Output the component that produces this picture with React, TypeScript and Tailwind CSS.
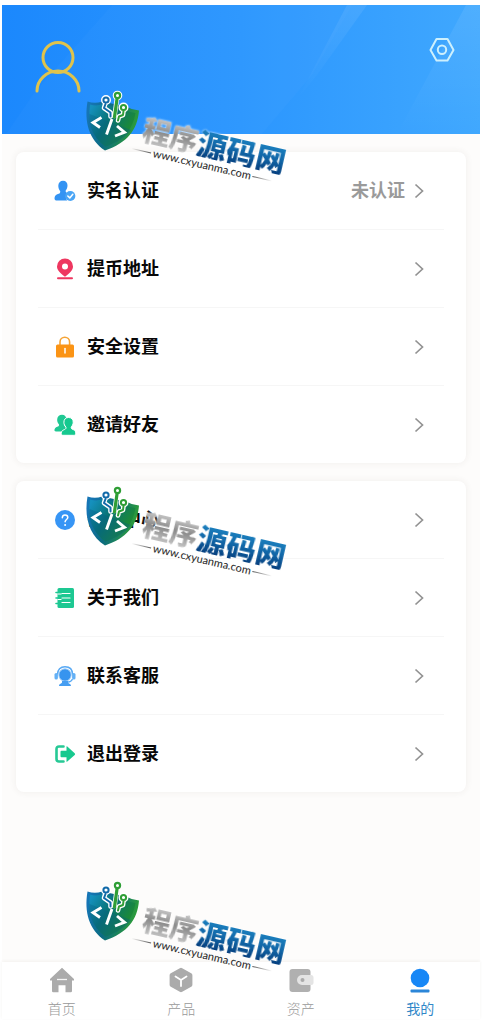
import React from "react";

const stroke = {
  fill: "none",
  stroke: "#fff",
  strokeLinecap: "round" as const,
  strokeLinejoin: "round" as const,
};

function VerifyIcon() {
  return (
    <svg viewBox="0 0 22 22" className="size-[22px]" aria-hidden="true">
      <path d="M9 0.8c3 0 4.7 2 4.5 5-.1 2.2-1 3.900-1.900 5 0 1.300.5 1.900 2 2.400a5 5 0 0 0-.3 7.300H3.200C1.300 20.500.4 19.700.5 17.900c.2-2.700 2.300-3.300 4.200-4.100 1.300-.5 1.700-1.400 1.500-2.600C5 9.800 4.300 8 4.300 5.800 4.300 2.800 6.200.8 9 .8z" fill="#3393f3" />
      <circle cx="16.300" cy="16" r="5.100" fill="#4aa5f5" />
      <path d="M13.800 16l2 1.900 3-3.600" {...stroke} strokeWidth="1.500" />
    </svg>
  );
}

function PinIcon() {
  return (
    <svg viewBox="0 0 22 22" className="size-[22px]" aria-hidden="true">
      <path fillRule="evenodd" d="M11 0.500a8 8 0 0 1 8 8c0 4-3.500 6.700-8 10.200C6.500 15.200 3 12.500 3 8.500a8 8 0 0 1 8-8zm0 5a3 3 0 1 0 0 6 3 3 0 0 0 0-6z" fill="#ee3760" />
      <rect x="3" y="19.200" width="16" height="2" rx="1" fill="#ee3760" />
    </svg>
  );
}

function LockIcon() {
  return (
    <svg viewBox="0 0 22 22" className="size-[22px]" aria-hidden="true">
      <path d="M6 9V6a4.800 4.800 0 0 1 9.600 0v3" fill="none" stroke="#f5a436" strokeWidth="1.600" />
      <rect x="2" y="8.500" width="18" height="13" rx="1.500" fill="#fb9415" />
      <path d="M11 12.500v4.500" {...stroke} strokeWidth="1.500" />
    </svg>
  );
}

function FriendsIcon() {
  return (
    <svg viewBox="0 0 22 22" className="size-[22px]" aria-hidden="true">
      <path d="M8 .8c2.700 0 4.400 1.800 4.300 4.500 0 3-1.200 4.400-2 5.300 0 2 1 2.400 2.700 3v3.900H2c-1.300 0-1.700-.8-1.500-2 .4-2.300 2.500-2.400 4-3.300.6-.5.7-1.200.4-1.900C3.700 9 3 7.500 3.200 5.300 3.300 2.600 5.300.8 8 .8z" fill="#20c893" />
      <path d="M14.500 3.500c3 0 4.800 1.900 4.700 4.700-.1 2.300-.9 3.700-2 4.800-.1 1.700.6 2.200 2.200 2.700 1.800.6 2.400 1.800 2.300 3.600 0 1.400-.5 2-1.900 2H8.900c-1.400 0-1.900-.8-1.700-2.200.3-2.300 1.500-2.800 3.200-3.500 1.500-.6 1.800-1.300 1.500-2.600-1.200-1.300-2-2.500-2-4.800 0-2.800 1.700-4.700 4.600-4.700z" fill="#15c98f" stroke="#fff" strokeWidth="1" />
    </svg>
  );
}

function HelpIcon() {
  return (
    <svg viewBox="0 0 22 22" className="size-[22px]" aria-hidden="true">
      <circle cx="11" cy="11" r="10" fill="#3795f5" />
      <path d="M8.300 8.700c.1-1.700 1.100-2.700 2.700-2.700s2.800 1 2.800 2.500c0 2-2.700 2.100-2.700 4.300" {...stroke} strokeWidth="1.500" />
      <circle cx="11.100" cy="15.900" r="1" fill="#fff" />
    </svg>
  );
}

function BookIcon() {
  return (
    <svg viewBox="0 0 22 22" className="size-[22px]" aria-hidden="true">
      <rect x="3.500" y="1" width="16.500" height="20" rx="1.500" fill="#1dc892" />
      <path d="M2 5.500h4M2 11h4M2 16.500h4" stroke="#1dc892" strokeWidth="1.600" strokeLinecap="round" />
      <path d="M4 7h3M4 12.500h3M8 6.500h8M8 11h8M8 15.500h8" {...stroke} strokeWidth="1.200" />
    </svg>
  );
}

function ServiceIcon() {
  return (
    <svg viewBox="0 0 22 22" className="size-[22px]" aria-hidden="true">
      <path d="M3.500 9.500C3.500 4.500 6.500 1.800 11 1.800s7.500 2.700 7.500 7.700" fill="none" stroke="#58a9f4" strokeWidth="1.500" />
      <rect x=".5" y="8" width="3.400" height="6.500" rx="1.600" fill="#63b0f5" />
      <rect x="18.100" y="8" width="3.400" height="6.500" rx="1.600" fill="#63b0f5" />
      <circle cx="11" cy="10" r="6.200" fill="#3694ef" stroke="#a4d0fa" strokeWidth="1" />
      <path d="M18.500 14c-.8 2-2.500 3-4.800 3.200" fill="none" stroke="#58a9f4" strokeWidth="1.200" />
      <path d="M8 16h6v1.500c0 1 3 1 3 3.500H5c0-2.500 3-2.500 3-3.500z" fill="#469ef2" />
    </svg>
  );
}

function LogoutIcon() {
  return (
    <svg viewBox="0 0 22 22" className="size-[22px]" aria-hidden="true">
      <path d="M9.500 3.500H5Q2.500 3.500 2.500 6v10Q2.500 18.500 5 18.500h4.500" fill="none" stroke="#26c995" strokeWidth="2.600" strokeLinecap="round" />
      <path d="M7.500 7.800h5V3.800q0-1 .8-.3l7.400 6.700q.9.900 0 1.800l-7.400 6.600q-.8.700-.8-.3v-4h-5q-1 0-1-1V8.800q0-1 1-1z" fill="#18c98f" />
    </svg>
  );
}

function Chevron() {
  return (
    <svg viewBox="0 0 10 16" className="h-4 w-[10px]" aria-hidden="true">
      <path d="M1.500 1.500l7 6.500-7 6.500" fill="none" stroke="#929292" strokeWidth="1.700" />
    </svg>
  );
}

type Item = { label: string; note?: string; icon: () => React.ReactElement };

const account: Item[] = [
  { label: "实名认证", note: "未认证", icon: VerifyIcon },
  { label: "提币地址", icon: PinIcon },
  { label: "安全设置", icon: LockIcon },
  { label: "邀请好友", icon: FriendsIcon },
];

const support: Item[] = [
  { label: "帮助中心", icon: HelpIcon },
  { label: "关于我们", icon: BookIcon },
  { label: "联系客服", icon: ServiceIcon },
  { label: "退出登录", icon: LogoutIcon },
];

function MenuCard({ items }: { items: Item[] }) {
  return (
    <ul className="mx-[14px] rounded-lg bg-white px-[22px] shadow-[0_0_7px_rgba(80,60,50,0.08)]">
      {items.map(({ label, note, icon: Icon }) => (
        <li key={label} className="border-b border-[#f6f6f6] last:border-b-0">
          <a href="#" className="flex h-[77px] items-center pr-5 pl-4">
            <Icon />
            <span className="ml-[11px] pb-[3px] text-[18px] leading-6 font-bold text-[#080808]">{label}</span>
            <span className="mr-[9px] ml-auto pb-[3px] text-[18px] leading-6 font-bold text-[#9a9a9a]">{note}</span>
            <Chevron />
          </a>
        </li>
      ))}
    </ul>
  );
}

function HomeIcon() {
  return (
    <svg viewBox="0 0 26 26" className="size-[26px]" aria-hidden="true">
      <path d="M13 .8L25 12v1.500h-2V24q0 1.300-1.300 1.300h-5.200v-7h-7v7H4.300Q3 25.300 3 24V13.500H1V12z" fill="#ababab" />
      <path d="M8 12.500h10" stroke="#f5f5f5" strokeWidth="1.300" />
    </svg>
  );
}

function ProductIcon() {
  return (
    <svg viewBox="0 0 26 26" className="size-[26px]" aria-hidden="true">
      <path d="M11.800 1.200q1.200-.7 2.400 0l9 5.100q1.200.7 1.200 2v9.400q0 1.300-1.200 2l-9 5.100q-1.200.7-2.400 0l-9-5.100q-1.200-.7-1.200-2V8.300q0-1.300 1.200-2z" fill="#ababab" />
      <path d="M7.500 9.500L13 13l5.500-3.500M13 13v6" {...stroke} strokeWidth="1.800" />
    </svg>
  );
}

function WalletIcon() {
  return (
    <svg viewBox="0 0 26 26" className="size-[26px]" aria-hidden="true">
      <rect x="1.500" y="2" width="21" height="23" rx="3" fill="#b0b0b0" />
      <path d="M14 8h9q2.500 0 2.500 2.500v5q0 2.500-2.500 2.500h-9a5 5 0 0 1 0-10z" fill="#e4e4e4" />
      <circle cx="14.500" cy="13" r="2" fill="#aaa" />
    </svg>
  );
}

function MineIcon() {
  return (
    <svg viewBox="0 0 26 26" className="size-[26px]" aria-hidden="true">
      <circle cx="13" cy="11" r="9.300" fill="#1787f6" />
      <rect x="3.500" y="22.500" width="19" height="3" rx="1" fill="#2b86d8" />
    </svg>
  );
}

const tabs = [
  { label: "首页", icon: HomeIcon, active: false },
  { label: "产品", icon: ProductIcon, active: false },
  { label: "资产", icon: WalletIcon, active: false },
  { label: "我的", icon: MineIcon, active: true },
];

function Shield({ id }: { id: string }) {
  return (
    <svg viewBox="0 0 54 60" className="h-[60px] w-[54px] shrink-0 overflow-visible" aria-hidden="true">
      <defs>
        <linearGradient id={`${id}-rim`} x1="0" y1="0.300" x2="1" y2="0.600">
          <stop offset="0" stopColor="#1675b5" />
          <stop offset="0.450" stopColor="#0b6b80" />
          <stop offset="1" stopColor="#32a52c" />
        </linearGradient>
        <linearGradient id={`${id}-body`} x1="0.100" y1="0" x2="0.900" y2="0.500">
          <stop offset="0" stopColor="#1590bd" />
          <stop offset="0.500" stopColor="#087273" />
          <stop offset="1" stopColor="#1c8a38" />
        </linearGradient>
      </defs>
      <path d="M1.500 9.500Q9 12 16 9.500L40 14.500Q46 18 53 18.500C51.500 38 41 51 19 58.500C3 48-2 30 1.500 9.500z" fill={`url(#${id}-rim)`} />
      <path d="M4 12.500Q11 14.500 17 12L39 17.500Q44 20.500 49.500 21C47 37 38 48 19.500 54.500C6 45 1.500 31 4 12.500z" fill={`url(#${id}-body)`} />
      <path d="M19.500 54.500C7 45 2.500 34 3.500 22L45 38C39 46 31 50.500 19.500 54.500z" fill="#075d87" opacity="0.350" />
      <g fill="none" strokeLinecap="round" strokeLinejoin="round">
        <path d="M19.500 11l-1.500 5 6.500 4.500v4M31 6l-2.500 18M37.500 19l-.5 4-4 1.500-1 4" stroke="#fff" strokeWidth="4.600" />
        <circle cx="20" cy="8" r="3" stroke="#fff" strokeWidth="4" />
        <circle cx="31.500" cy="3.500" r="3" stroke="#fff" strokeWidth="3.600" />
        <circle cx="37.500" cy="15.500" r="3" stroke="#fff" strokeWidth="4" />
        <path d="M19.500 12l-1.500 4 6.500 4.500v4" stroke="#126aa9" strokeWidth="2" />
        <path d="M31 7l-2.500 18" stroke="#2f9e35" strokeWidth="3.200" />
        <path d="M37.500 19l-.5 4-4 1.500-1 4" stroke="#2f9e35" strokeWidth="2" />
        <circle cx="20" cy="8" r="2.600" fill="#fff" stroke="#126aa9" strokeWidth="2" />
        <circle cx="31.500" cy="3.500" r="2.600" fill="#fff" stroke="#2f9e35" strokeWidth="2.200" />
        <circle cx="37.500" cy="15.500" r="2.600" fill="#fff" stroke="#2f9e35" strokeWidth="2" />
        <path d="M15.500 25.500L7 30.500l7 5M26 27l-5.500 15.500M31 34l7.500 6.300-9.500 3.700" stroke="#fff" strokeWidth="2.900" strokeLinecap="butt" strokeLinejoin="miter" />
      </g>
    </svg>
  );
}

function Brand({ id, place }: { id: string; place: string }) {
  return (
    <div className={`pointer-events-none absolute left-[86px] flex items-start ${place}`}>
      <Shield id={id} />
      <div className="mt-5 origin-top-left rotate-[13deg]">
        <div className="flex items-center pl-[7px] leading-[30px] font-black whitespace-nowrap">
          <span className="bg-linear-to-b from-[#cfcfcf] via-[#8b8b8b] to-[#c4c4c4] bg-clip-text text-[28px] text-transparent drop-shadow-[0_0_1px_#fff]">程序</span>
          <span className="bg-linear-to-b from-[#1d85c3] via-[#1268a9] to-[#07407f] bg-clip-text text-[30px] text-transparent drop-shadow-[0_0_1px_#fff]">源码网</span>
        </div>
        <div className="flex items-center gap-[2px] text-[#333]">
          <span className="h-px w-5 bg-linear-to-r from-transparent to-[#555]" />
          <span className="font-[Lato,sans-serif] text-[11px] leading-[14px] font-medium">www.cxyuanma.com</span>
          <span className="h-px w-5 bg-linear-to-l from-transparent to-[#555]" />
        </div>
      </div>
    </div>
  );
}

export default function App() {
  return (
    <div className="relative flex min-h-screen flex-col overflow-hidden bg-white px-[2px] pt-[5px] pb-[5px] font-['Noto_Sans_CJK_SC',sans-serif]">
      <header className="relative flex h-[129px] items-start justify-between bg-linear-to-r from-[#1b88fd] via-[#2b96fe] to-[#40a8fe] pr-[25px] pl-[33px]">
        <svg viewBox="0 0 478 129" preserveAspectRatio="none" className="absolute inset-0 size-full" aria-hidden="true">
          <defs>
            <linearGradient id="ray" x1="0" y1="0" x2="0" y2="1">
              <stop offset="0" stopColor="#fff" stopOpacity="0.080" />
              <stop offset="1" stopColor="#fff" stopOpacity="0" />
            </linearGradient>
          </defs>
          <path d="M4 129L32 88L110 0H350L310 70L260 129z" fill="#fff" opacity="0.020" />
          <path d="M345 0h20L315 70L295 95z" fill="url(#ray)" />
          <path d="M464 0h14v129H395z" fill="url(#ray)" />
        </svg>
        <svg viewBox="0 0 46 52" className="relative mt-9 h-[52px] w-[46px]" fill="none" stroke="#dfc34c" strokeWidth="3" strokeLinecap="round" role="img" aria-label="头像">
          <circle cx="23" cy="16.500" r="15" />
          <path d="M2 50a21 20 0 0 1 42 0" />
        </svg>
        <button type="button" aria-label="设置" className="relative mt-8 size-[26px]">
          <svg viewBox="0 0 26 26" className="size-[26px]" fill="none" stroke="#cdf0fd" strokeWidth="2" strokeLinejoin="round" aria-hidden="true">
            <path d="M7.500 2h11l6 11-6 10.500h-11L1.500 13z" />
            <circle cx="13" cy="12.700" r="4.200" />
          </svg>
        </button>
      </header>
      <main className="flex flex-1 flex-col gap-[18px] bg-[#fdfcfb] pt-[18px] pb-4">
        <MenuCard items={account} />
        <MenuCard items={support} />
      </main>
      <nav className="grid grid-cols-4 bg-white pt-[5px] shadow-[0_-1px_3px_rgba(80,60,40,0.06)]">
        {tabs.map(({ label, icon: Icon, active }) => (
          <a key={label} href="#" className={`flex flex-col items-center gap-1 text-[14px] leading-[22px] ${active ? "text-[#3188c8]" : "font-light text-[#999]"}`}>
            <Icon />
            {label}
          </a>
        ))}
      </nav>
      <Brand id="brand-top" place="top-[92px]" />
      <Brand id="brand-middle" place="top-[487px]" />
      <Brand id="brand-bottom" place="top-[882px]" />
    </div>
  );
}
